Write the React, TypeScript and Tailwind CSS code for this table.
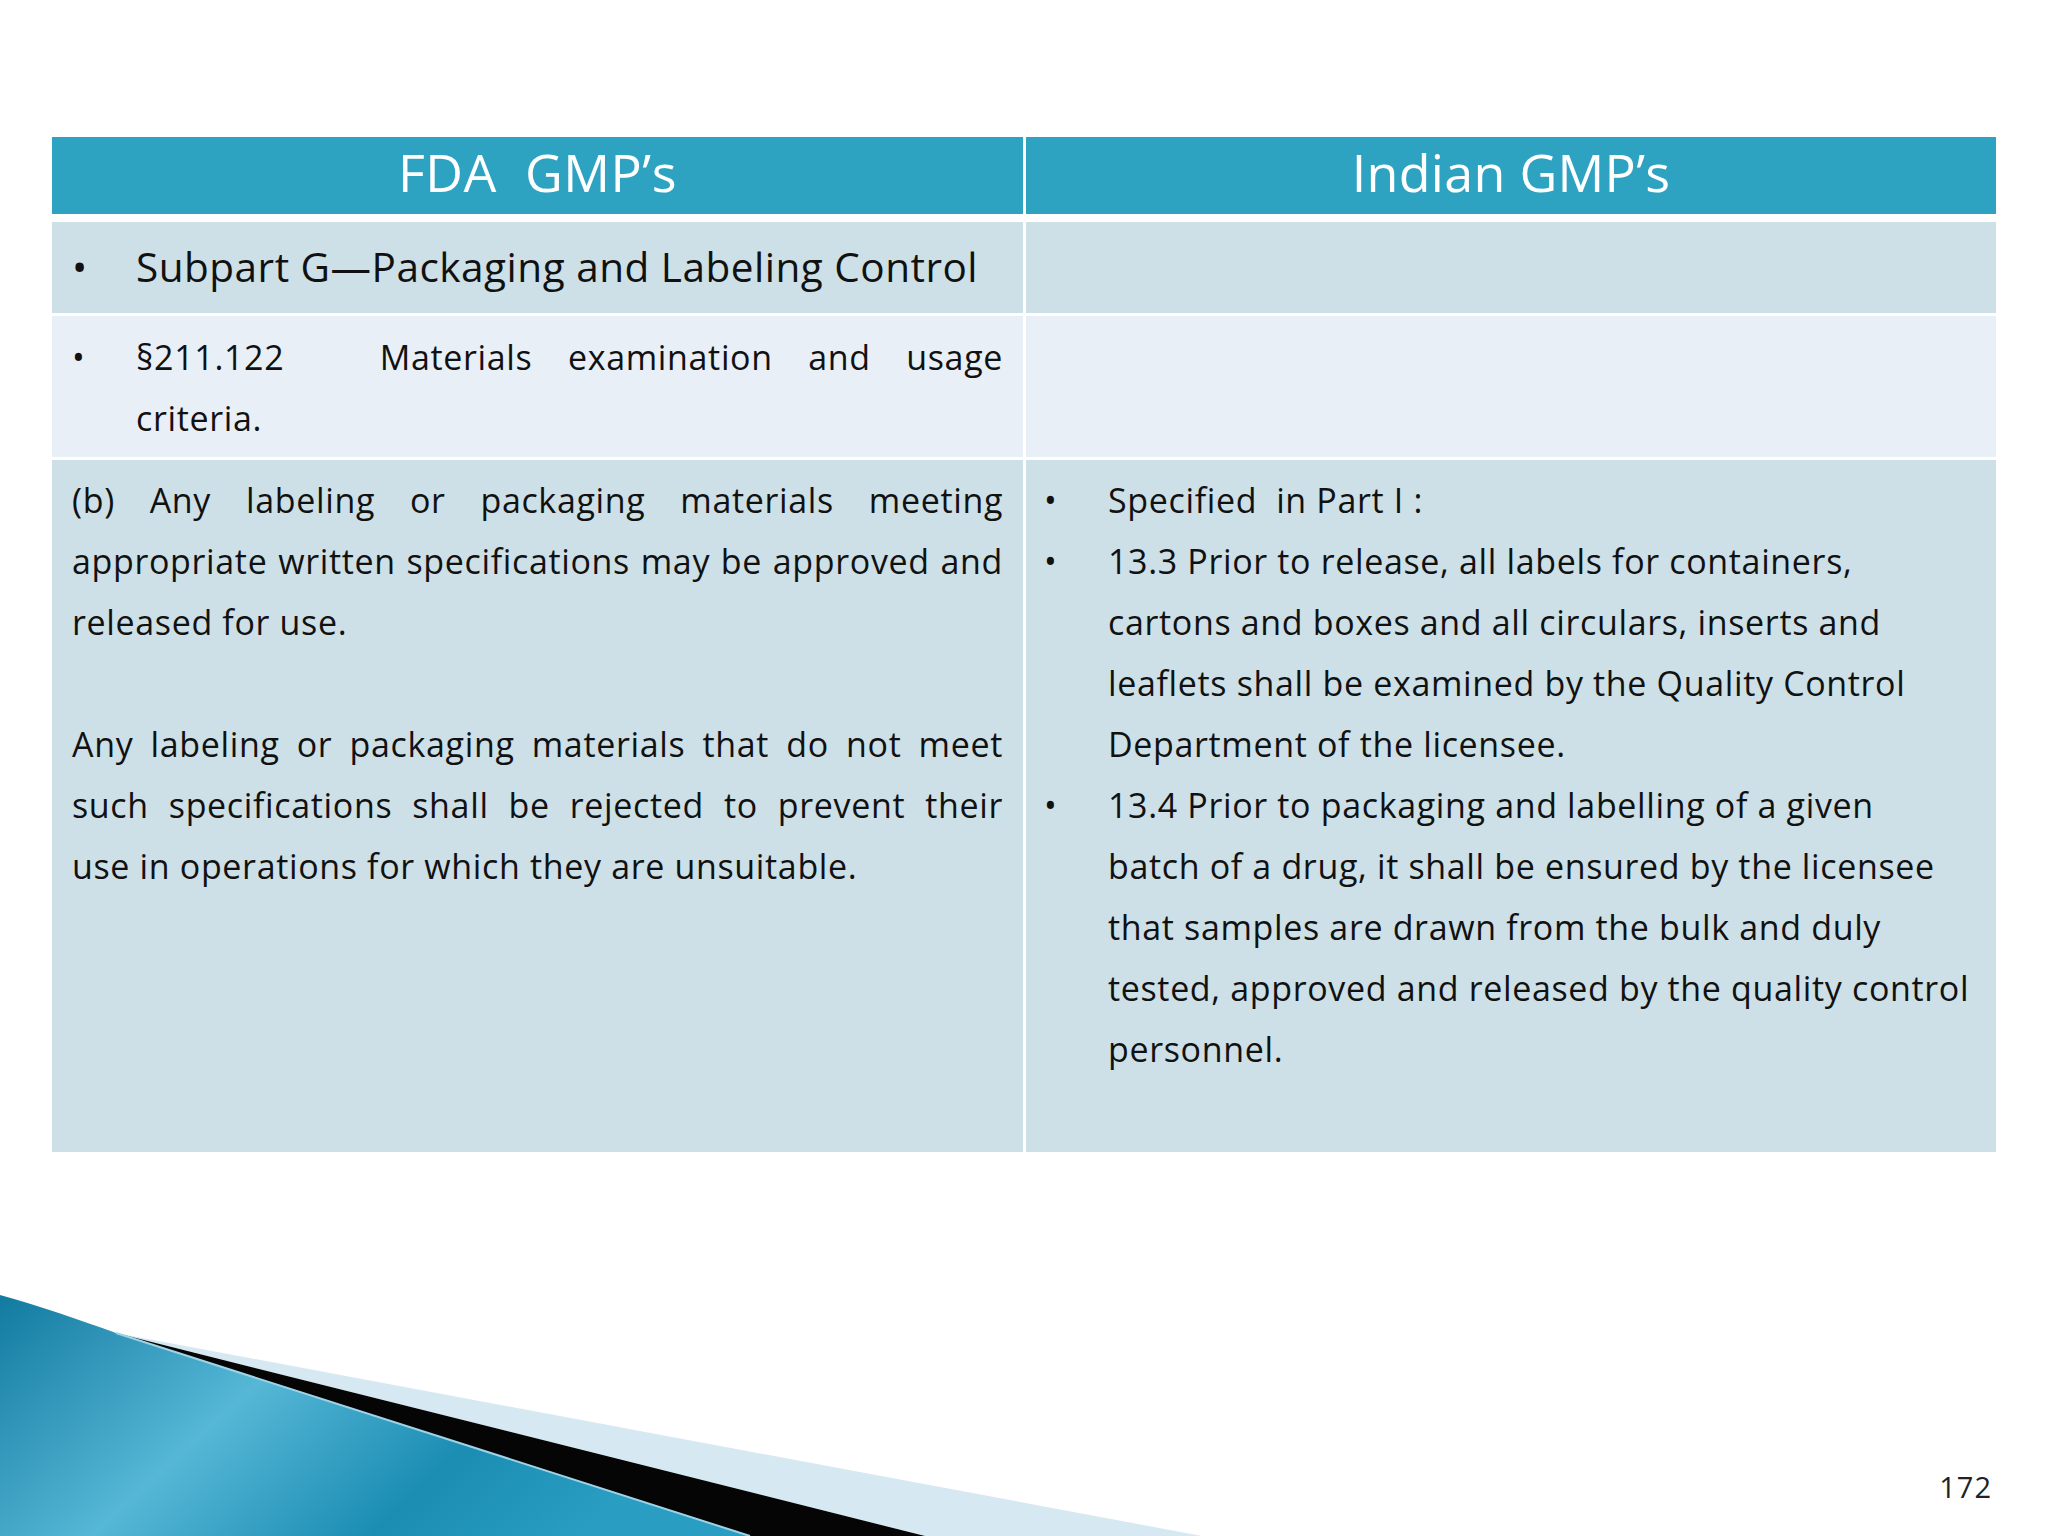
import React from "react";

const J = "[text-align-last:justify] text-justify";

function Bullet({ children, size = "text-[34px]" }: { children: React.ReactNode; size?: string }) {
  return (
    <div className={`flex ${size}`}>
      <span className="w-[64px] shrink-0 tracking-normal">•</span>
      <div className="flex-1">{children}</div>
    </div>
  );
}

export default function App() {
  return (
    <div className="relative w-[2048px] h-[1536px] bg-white overflow-hidden font-['Open_Sans',sans-serif] text-[#111]">
      <svg
        className="absolute left-0 bottom-0"
        width="1300"
        height="250"
        viewBox="0 0 1300 250"
      >
        <defs>
          <linearGradient id="blue" x1="0" y1="0" x2="1" y2="0.35">
            <stop offset="0" stopColor="#127aa0" />
            <stop offset="0.42" stopColor="#56b7d6" />
            <stop offset="0.75" stopColor="#1b8db3" />
            <stop offset="1" stopColor="#2a9dc2" />
          </linearGradient>
        </defs>
        <path d="M116 47 L1202 250 L925 250 Z" fill="#d6e8f1" />
        <path d="M116 47 L925 250 L750 250 Z" fill="#050505" />
        <path d="M0 9 C40 20 80 34 116 47 L750 250 L0 250 Z" fill="url(#blue)" />
        <path d="M116 47 L750 250" stroke="#9fd4e6" strokeWidth="2" />
      </svg>

      <div className="relative pt-[137px] px-[52px]">
        <div className="grid grid-cols-[971px_970px] gap-x-[3px]">
          <div className="h-[77px] pb-[8px] bg-[#2ea3c1] text-white text-[52px] tracking-[0.5px] flex items-center justify-center whitespace-pre leading-none">
            FDA  GMP’s
          </div>
          <div className="h-[77px] pb-[8px] bg-[#2ea3c1] text-white text-[52px] tracking-[0.3px] flex items-center justify-center leading-none">
            Indian GMP’s
          </div>
        </div>

        <div className="mt-[8px] grid grid-cols-[971px_970px] grid-rows-[91px_141px_692px] gap-[3px]">
          <div className="bg-[#cde0e7] px-[20px] flex items-center tracking-[0.5px]">
            <Bullet size="text-[40.5px]">Subpart G—Packaging and Labeling Control</Bullet>
          </div>
          <div className="bg-[#cde0e7]" />

          <div className="bg-[#e8eff6] pl-[20px] pr-[20px] pt-[11px] leading-[61px] tracking-[0.65px]">
            <Bullet>
              <div className={J}>
                §211.122<span className="inline-block w-[60px]" /> Materials examination and usage
              </div>
              <div>criteria.</div>
            </Bullet>
          </div>
          <div className="bg-[#e8eff6]" />

          <div className="bg-[#cde0e7] px-[20px] pt-[10px] text-[34px] leading-[61px] tracking-[0.65px]">
            <div className={J}>(b) Any labeling or packaging materials meeting</div>
            <div className={J}>appropriate written specifications may be approved and</div>
            <div>released for use.</div>
            <div className="h-[61px]" />
            <div className={J}>Any labeling or packaging materials that do not meet</div>
            <div className={J}>such specifications shall be rejected to prevent their</div>
            <div>use in operations for which they are unsuitable.</div>
          </div>
          <div className="bg-[#cde0e7] pl-[18px] pr-[10px] pt-[10px] leading-[61px] tracking-[0.65px]">
            <Bullet>Specified&nbsp; in Part I :</Bullet>
            <Bullet>
              <div>13.3 Prior to release, all labels for containers,</div>
              <div>cartons and boxes and all circulars, inserts and</div>
              <div>leaflets shall be examined by the Quality Control</div>
              <div>Department of the licensee.</div>
            </Bullet>
            <Bullet>
              <div>13.4 Prior to packaging and labelling of a given</div>
              <div>batch of a drug, it shall be ensured by the licensee</div>
              <div>that samples are drawn from the bulk and duly</div>
              <div>tested, approved and released by the quality control</div>
              <div>personnel.</div>
            </Bullet>
          </div>
        </div>

        <div className="mt-[320px] flex justify-end pr-[4px] text-[29px] tracking-[1px] leading-none text-[#222]">
          172
        </div>
      </div>
    </div>
  );
}
